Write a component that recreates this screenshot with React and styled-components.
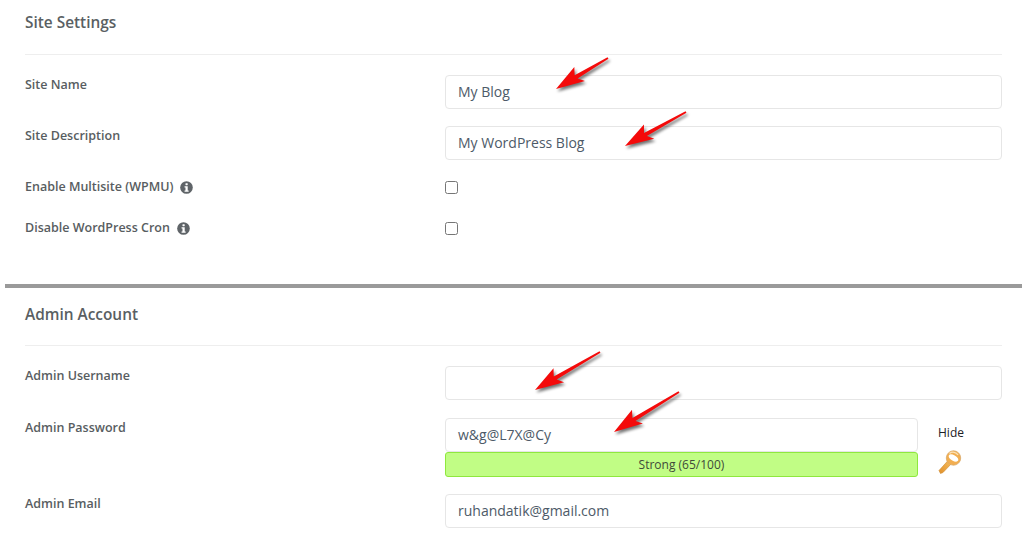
import React from "react";
import styled, { createGlobalStyle } from "styled-components";

const Global = createGlobalStyle`
  html, body { margin: 0; padding: 0; background: #fff; }
  body { font-family: "Open Sans", "Liberation Sans", sans-serif; overflow: hidden; }
  * { box-sizing: border-box; }
`;

const Page = styled.div`
  position: relative;
  width: 1036px;
  height: 550px;
  overflow: hidden;
`;

const Section = styled.section`
  padding: ${(p) => p.$top}px 34px 0 25px;
  height: ${(p) => p.$height}px;
`;

const Heading = styled.h2`
  margin: 0;
  height: ${(p) => p.$height}px;
  padding-top: 12px;
  border-bottom: 1px solid #eeeeee;
  font-size: 15.4px;
  line-height: 22px;
  font-weight: 550;
  color: #5a5f63;
  box-sizing: content-box;
`;

const Rows = styled.div`
  display: flex;
  flex-direction: column;
  padding-top: 20px;
`;

const Row = styled.div`
  display: grid;
  grid-template-columns: 420px 1fr;
  height: ${(p) => p.$height}px;
`;

const Label = styled.label`
  display: flex;
  align-items: center;
  gap: 7px;
  height: 20px;
  font-size: 12.5px;
  line-height: 18px;
  font-weight: 550;
  color: #585d61;
`;

const Field = styled.div`
  width: ${(p) => p.$width || "100%"};
  height: 34px;
  padding: 0 12px 2px;
  display: flex;
  align-items: center;
  background: #fff;
  border: 1px solid #e6e6e6;
  border-radius: 4px;
  font-size: 14px;
  color: #4d5a68;
`;

const Check = styled.span`
  display: block;
  width: 13px;
  height: 13px;
  margin-top: ${(p) => p.$top}px;
  border: 1px solid #767676;
  border-radius: 2.5px;
  background: #fff;
`;

const Divider = styled.hr`
  margin: 0 14px 0 5px;
  height: 4px;
  border: 0;
  background: #9a9a9a;
`;

const PasswordGrid = styled.div`
  display: grid;
  grid-template-columns: 473px 1fr;
`;

const PasswordStack = styled.div`
  display: flex;
  flex-direction: column;
`;

const Strength = styled.div`
  height: 25px;
  display: flex;
  align-items: center;
  justify-content: center;
  background: #c1fd85;
  border: 1px solid #8fe83e;
  border-radius: 3px;
  font-size: 12px;
  color: #3f4a3a;
`;

const Side = styled.div`
  display: flex;
  flex-direction: column;
  align-items: flex-start;
  padding: 6px 0 0 20px;
  gap: 9px;
`;

const Hide = styled.span`
  font-size: 12px;
  line-height: 17px;
  font-weight: 500;
  color: #1d2126;
`;

const ArrowLayer = styled.svg`
  position: absolute;
  inset: 0;
  width: 1036px;
  height: 550px;
  pointer-events: none;
`;

const InfoIcon = () => (
  <svg width="13" height="13" viewBox="0 0 14 14" aria-hidden="true">
    <circle cx="7" cy="7" r="6.8" fill="#5f6468" />
    <rect x="5.9" y="2.3" width="2.4" height="2.3" rx="0.5" fill="#fff" />
    <path d="M4.9 5.7h3.4v4.6h1v1.4H4.9v-1.4h1V7.1h-1z" fill="#fff" />
  </svg>
);

const KeyIcon = () => (
  <svg width="24" height="25" viewBox="0 0 24 25" aria-hidden="true">
    <defs>
      <linearGradient id="keyGold" x1="0" y1="1" x2="1" y2="0">
        <stop offset="0" stopColor="#e08f2a" />
        <stop offset="1" stopColor="#f8c264" />
      </linearGradient>
    </defs>
    <path d="M1 20.5 L11 9.5 L14.5 12.5 L5 22.5 L2.5 23.5 Z" fill="url(#keyGold)" stroke="#cf8a2e" strokeWidth="0.6" />
    <circle cx="15.5" cy="8" r="7.2" fill="#f2ae50" stroke="#d9a868" strokeWidth="0.8" />
    <path d="M10.8 5.4 A5.4 3 30 0 1 20.2 10.6 A5.4 3 30 0 1 10.8 5.4 Z" fill="#fff" />
    <path d="M11.5 3.4 A5.8 5.8 0 0 1 20 5" stroke="#fbe3b8" strokeWidth="1.3" fill="none" />
  </svg>
);

/* Hand-drawn red pointer from tail (x1,y1) to tip (x2,y2) */
const Arrow = ({ x1, y1, x2, y2 }) => {
  const dx = x2 - x1;
  const dy = y2 - y1;
  const len = Math.hypot(dx, dy);
  const ux = dx / len;
  const uy = dy / len;
  const nx = -uy;
  const ny = ux;
  const at = (along, side) => `${x2 - ux * along + nx * side},${y2 - uy * along + ny * side}`;
  const pts = [
    `${x1 + nx * 0.9},${y1 + ny * 0.9}`,
    at(23, 2.2),
    at(27, 9.5),
    `${x2},${y2}`,
    at(29, -8),
    at(24, -2),
    `${x1 - nx * 0.9},${y1 - ny * 0.9}`,
  ].join(" ");
  return (
    <g>
      <polygon points={pts} fill="#000" opacity="0.55" transform="translate(1.5 2.5)" filter="url(#arrowShadow)" />
      <polygon points={pts} fill="#f40a0a" strokeLinejoin="round" />
    </g>
  );
};

const arrows = [
  { x1: 608, y1: 58, x2: 556, y2: 89 },
  { x1: 686, y1: 112, x2: 625, y2: 146 },
  { x1: 600, y1: 352, x2: 535, y2: 390 },
  { x1: 679, y1: 392, x2: 614, y2: 432 },
];

export default function App() {
  return (
    <Page>
      <Global />
      <Section $top={0} $height={284}>
        <Heading $height={42}>Site Settings</Heading>
        <Rows>
          <Row $height={51}>
            <Label>Site Name</Label>
            <Field>My Blog</Field>
          </Row>
          <Row $height={51}>
            <Label>Site Description</Label>
            <Field>My WordPress Blog</Field>
          </Row>
          <Row $height={41}>
            <Label>Enable Multisite (WPMU) <InfoIcon /></Label>
            <Check $top={4} />
          </Row>
          <Row $height={41}>
            <Label>Disable WordPress Cron <InfoIcon /></Label>
            <Check $top={4} />
          </Row>
        </Rows>
      </Section>
      <Divider />
      <Section $top={4} $height={262}>
        <Heading $height={41}>Admin Account</Heading>
        <Rows>
          <Row $height={52}>
            <Label>Admin Username</Label>
            <Field />
          </Row>
          <Row $height={76}>
            <Label>Admin Password</Label>
            <PasswordGrid>
              <PasswordStack>
                <Field>w&amp;g@L7X@Cy</Field>
                <Strength>Strong (65/100)</Strength>
              </PasswordStack>
              <Side>
                <Hide>Hide</Hide>
                <KeyIcon />
              </Side>
            </PasswordGrid>
          </Row>
          <Row $height={40}>
            <Label>Admin Email</Label>
            <Field>ruhandatik@gmail.com</Field>
          </Row>
        </Rows>
      </Section>
      <ArrowLayer viewBox="0 0 1036 550" aria-hidden="true">
        <defs>
          <filter id="arrowShadow" x="-20%" y="-20%" width="140%" height="140%">
            <feGaussianBlur stdDeviation="1.4" />
          </filter>
        </defs>
        {arrows.map((a) => (
          <Arrow key={a.x2} {...a} />
        ))}
      </ArrowLayer>
    </Page>
  );
}
